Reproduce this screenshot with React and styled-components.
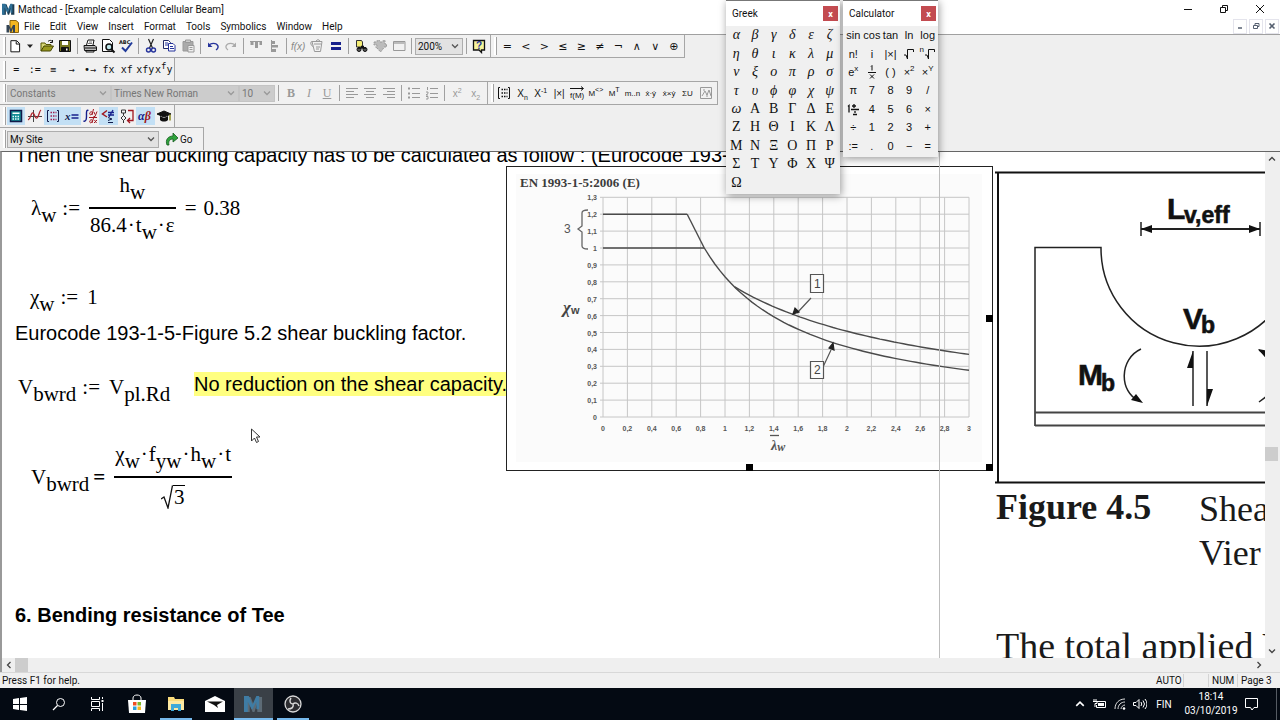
import styled, { createGlobalStyle } from 'styled-components'

const GlobalStyle = createGlobalStyle`
    * { box-sizing: border-box; }
    body {
        margin: 0;
        background: #efefef;
        font-family: Roboto, "Open Sans", sans-serif;
        font-size: 10px;
        color: #111111;
    }
    button, select {
        font-family: inherit;
        font-size: inherit;
        color: inherit;
        border: 0;
        margin: 0;
        padding: 0;
        background: transparent;
    }
    h1, h2, p { margin: 0; font-weight: 400; }
`

const Screen = styled.div`
    position: relative;
    display: flex;
    flex-direction: column;
    height: 100vh;
    overflow: hidden;
    white-space: nowrap;
`
const TitleBar = styled.header`
    display: flex;
    align-items: center;
    height: 18px;
    padding: 0 2px;
    gap: 3px;
    background: #ffffff;
    & > h1 {
        flex: 1;
        font-size: 10px;
    }
`
const MenuBar = styled.nav`
    display: flex;
    align-items: center;
    height: 17px;
    padding-left: 6px;
    background: #ffffff;
    border-bottom: 1px solid #a0a0a0;
`
const MenuList = styled.div`
    display: flex;
    flex: 1;
    gap: 10px;
    padding-left: 5px;
`
const WindowButtons = styled.div`
    display: flex;
    & > button {
        width: 36px;
        height: 16px;
        display: flex;
        align-items: center;
        justify-content: center;
    }
`
const ChildButtons = styled.div`
    display: flex;
    gap: 2px;
    padding-right: 1px;
    & > button {
        width: 14px;
        height: 15px;
        border: 1px solid #e4e4ec;
        display: flex;
        align-items: center;
        justify-content: center;
    }
`

const BarRow = styled.div`
    display: flex;
    height: ${p => p.$h}px;
`
const Bar = styled.div`
    display: flex;
    align-items: center;
    background: #f1f1f1;
    border-right: 1px solid #a6a6a6;
    border-top: ${p => p.$top ? '1px solid #a6a6a6' : '0'};
    border-bottom: ${p => p.$bottom ? '1px solid #a6a6a6' : '0'};
    padding-right: ${p => p.$end || 1}px;
    color: ${p => p.$muted ? '#999999' : '#111111'};
`
const Grip = styled.div`
    width: 7px;
    height: 18px;
    padding-left: 3px;
    &::after {
        content: "";
        display: block;
        width: 2px;
        height: 100%;
        background: #ffffff;
        border-right: 1px solid #a0a0a0;
    }
`
const Sep = styled.div`
    width: 7px;
    height: 16px;
    padding-left: 3px;
    &::after {
        content: "";
        display: block;
        width: 1px;
        height: 100%;
        background: #a0a0a0;
    }
`
const Group = styled.div`
    display: flex;
    width: ${p => p.$w}px;
`
const Tool = styled.button`
    flex: 1;
    min-width: 0;
    height: 18px;
    display: flex;
    align-items: center;
    justify-content: center;
    background: ${p => p.$on ? '#c3e0f5' : 'transparent'};
    font: ${p => p.$mono ? '10px "DejaVu Sans Mono", monospace' : '11px "DejaVu Sans", sans-serif'};
    & sup { font-size: 9px; line-height: 0; }
`
const LetterTool = styled(Tool)`
    font: 12px "Liberation Serif", serif;
    font-weight: ${p => p.$bold ? 700 : 400};
    font-style: ${p => p.$italic ? 'italic' : 'normal'};
    text-decoration: ${p => p.$underline ? 'underline' : 'none'};
`
const SelectBox = styled.div`
    display: flex;
    align-items: center;
    position: relative;
    width: ${p => p.$w}px;
    height: 17px;
    background: ${p => p.disabled ? '#cccccc' : '#e2e2e2'};
    border: 1px solid ${p => p.disabled ? '#c4c4c4' : '#adadad'};
    & > select {
        appearance: none;
        width: 100%;
        height: 15px;
        padding-left: 2px;
        color: ${p => p.disabled ? '#777777' : '#111111'};
        opacity: 1;
    }
    & > svg {
        position: absolute;
        right: 3px;
        pointer-events: none;
    }
`
const GoButton = styled.button`
    display: flex;
    align-items: center;
    gap: 1px;
    height: 18px;
    margin: 0 1px 0 6px;
`

const Document = styled.main`
    display: flex;
    flex: 1;
    min-height: 0;
    margin-top: 1px;
    border-top: 1px solid #666666;
    border-left: 2px solid #999999;
`
const DocumentBody = styled.div`
    display: flex;
    flex-direction: column;
    flex: 1;
    min-width: 0;
`
const Sheet = styled.section`
    position: relative;
    flex: 1;
    overflow: hidden;
    background: #ffffff;
    font-family: "Liberation Sans", Arial, sans-serif;
    font-size: 20px;
    line-height: 24px;
    color: #000000;
`
/* a worksheet region sits where the user dropped it */
const Region = styled.div`
    position: absolute;
    left: ${p => p.$x}px;
    top: ${p => p.$y}px;
`
const PageEdge = styled.div`
    position: absolute;
    left: 937px;
    top: 0;
    bottom: 0;
    border-left: 1px solid #bdbdbd;
`
const Note = styled.p`
    background: ${p => p.$mark ? '#ffff80' : 'transparent'};
`
const Heading = styled.h2`
    font-size: 20px;
    font-weight: 700;
`
const Book = styled.p`
    font-family: "Liberation Serif", serif;
    font-size: ${p => p.$size || 36}px;
    font-weight: ${p => p.$bold ? 700 : 400};
    line-height: 44px;
    color: #1a1a1a;
`
const MathRow = styled.div`
    display: flex;
    align-items: center;
    font-family: "Liberation Serif", serif;
    font-size: 21px;
    line-height: 24px;
    & sub {
        font-size: 21px;
        line-height: 0;
        vertical-align: -7px;
    }
`
const Op = styled.span`
    padding: 0 ${p => p.$r || 9}px 0 ${p => p.$l || 6}px;
    font-weight: ${p => p.$bold ? 700 : 400};
`
const Dot = styled.i`
    padding: 0 1px;
    font-style: normal;
    &::before { content: "·"; }
`
const Frac = styled.div`
    display: flex;
    flex-direction: column;
    text-align: center;
    & > span:first-child {
        height: 34px;
        padding: 0 1px;
    }
    & > span:last-child {
        height: 36px;
        padding: 4px 1px 0;
        border-top: 2px solid #000000;
    }
`
const Root = styled.span`
    display: flex;
    justify-content: center;
    & > b {
        font-weight: 400;
        border-top: 1px solid #000000;
        margin-top: 3px;
        line-height: 23px;
        padding: 0 1px;
    }
    & > svg { margin-top: 3px; }
`

const ScrollColumn = styled.div`
    display: flex;
    flex-direction: column;
    width: 15px;
    padding-right: 2px;
    background: #efefef;
`
const ScrollRow = styled.div`
    display: flex;
    height: 14px;
    background: #efefef;
`
const ScrollButton = styled.button`
    width: 13px;
    height: 14px;
    display: flex;
    align-items: center;
    justify-content: center;
`
const Track = styled.div`
    flex: ${p => p.$grow} 1 0;
`
const Thumb = styled.div`
    width: 13px;
    height: 14px;
    background: #cdcdcd;
`
const StatusBar = styled.footer`
    display: flex;
    align-items: center;
    height: 16px;
    padding-left: 2px;
    background: #f0f0f0;
    border-top: 1px solid #d8d8d8;
    & > p { flex: 1; }
`
const StatusCell = styled.span`
    width: ${p => p.$w}px;
    height: 13px;
    line-height: 13px;
    padding-left: 3px;
    border-left: 1px solid ${p => p.$open ? 'transparent' : '#d4d4d4'};
`

const Taskbar = styled.footer`
    display: flex;
    height: 32px;
    background: #040a13;
    color: #ffffff;
`
const TaskButton = styled.button`
    width: 39px;
    height: 32px;
    display: flex;
    align-items: center;
    justify-content: center;
    background-color: ${p => p.$active ? '#3a4047' : 'transparent'};
    background-image: ${p => p.$running ? 'linear-gradient(#76b9ed, #76b9ed)' : 'none'};
    background-size: ${p => p.$active ? 39 : 32}px 2px;
    background-position: bottom center;
    background-repeat: no-repeat;
`
const Tray = styled.div`
    display: flex;
    align-items: center;
    margin-left: auto;
    & > button {
        display: flex;
        justify-content: center;
        width: 20px;
    }
`
const Language = styled.span`
    width: 28px;
    text-align: center;
`
const Clock = styled.time`
    width: 62px;
    margin-left: 2px;
    text-align: center;
    font-size: 10px;
    line-height: 14px;
`
const ShowDesktop = styled.div`
    width: 4px;
    height: 32px;
    margin-left: 14px;
    border-left: 1px solid #555b63;
`

const Palette = styled.section`
    position: absolute;
    top: 0;
    left: ${p => p.$x}px;
    padding: 0 1px 2px;
    background: #f0f0f0;
    border-top: 1px solid #777777;
    box-shadow: 1px 2px 8px rgba(0, 0, 0, 0.4);
`
const PaletteTitle = styled.div`
    display: flex;
    align-items: center;
    justify-content: space-between;
    height: 25px;
    margin: 0 -1px;
    padding: 0 2px 0 6px;
    background: #ffffff;
    & > button {
        width: 15px;
        height: 15px;
        background: #c34b50;
        color: #ffffff;
        font-weight: 700;
        font-size: 9px;
        line-height: 12px;
    }
`
const PaletteGrid = styled.div`
    display: grid;
    width: ${p => p.$w}px;
    height: ${p => p.$h}px;
    grid-template-columns: repeat(${p => p.$cols}, 1fr);
    grid-auto-rows: 1fr;
    & > button {
        display: flex;
        align-items: center;
        justify-content: center;
        min-width: 0;
        font-family: ${p => p.$serif ? '"Liberation Serif", serif' : '"Liberation Sans", sans-serif'};
        font-size: ${p => p.$serif ? 14 : 11}px;
        line-height: 16px;
    }
    & sup {
        align-self: flex-start;
        font-size: 8px;
        line-height: 12px;
    }
`
const GreekKey = styled.button`
    font-style: ${p => p.$italic ? 'italic' : 'normal'};
`

/* ---------- small drawings ---------- */

function Icon({ w = 16, h = 16, children, ...rest }) {
    return (
        <svg width={w} height={h} viewBox={`0 0 ${w} ${h}`} fill="none" stroke="#111" strokeWidth="1" aria-hidden="true" {...rest}>
            {children}
        </svg>
    )
}

function Chevron({ dir = 'down', color = '#444', size = 8 }) {
    const turn = { down: 0, left: 90, up: 180, right: 270 }[dir]
    return (
        <svg width={size} height={size} viewBox="0 0 8 8" fill="none" stroke={color} strokeWidth="1.3" aria-hidden="true">
            <path d="M1 2.5L4 5.5L7 2.5" transform={`rotate(${turn} 4 4)`} />
        </svg>
    )
}

function MLogo({ size = 13, front = '#2f6f96', back = '#1d3d52' }) {
    return (
        <svg width={size} height={size} viewBox="0 0 20 20" aria-hidden="true">
            <path d="M1 2h6l3 8 3-8h6v16h-5V9l-3 9H9L6 9v9H1z" fill={back} />
            <path d="M0 1h5l4 9 4-9h3v14h-3V7l-4 8H8L4 7v11H0z" fill={front} />
        </svg>
    )
}

const icons = {
    fresh: <Icon><path d="M4 2.5h6l3 3V14H4zM9.5 3v3H13" fill="#fff" /></Icon>,
    drop: <Icon w={8} h={8}><path d="M1 2.5h6L4 6z" fill="#222" stroke="none" /></Icon>,
    open: <Icon><path d="M2 13V5h4l1 1.5h5V8" fill="#d8d878" stroke="#555500" /><path d="M2 13l3-5h9.5l-3 5z" fill="#9a9a20" stroke="#444400" /><path d="M9 3.5c2-2 4-1 4.5.5M13.5 2v2.5H11" /></Icon>,
    save: <Icon><path d="M2.5 2.5h11v11h-11z" fill="#777722" /><path d="M5 3h6v4H5z" fill="#fff" stroke="none" /><path d="M4.5 9.5h7V13h-7z" fill="#111" /><path d="M9 10.5h1.5v2H9z" fill="#fff" stroke="none" /></Icon>,
    print: <Icon><path d="M4.5 7l1.5-5h6l-1 5" fill="#fff" /><path d="M2 7.5h11l1.5 1.5v3.5h-12z" fill="#bbb" /><path d="M3 10h11M4 12.5h8v1.5H4z" fill="#ddd" /><path d="M7 4h3M6 5.5h4" stroke="#777" /></Icon>,
    preview: <Icon><path d="M2.5 1.5h7l3 3v9h-10z" fill="#fff" /><circle cx="9" cy="9" r="3" fill="#bfe6ea" strokeWidth="1.5" /><path d="M11 11l3.5 3.5" strokeWidth="2" /></Icon>,
    spell: <Icon><text x="1" y="6" fontSize="5" fontFamily="DejaVu Sans" fontWeight="700" stroke="none" fill="#111">ABC</text><path d="M4 9.5L7.5 13L14 4.5" stroke="#203a9a" strokeWidth="2" /></Icon>,
    cut: <Icon><path d="M5.5 1l4 9M10.5 1l-4 9" stroke="#222" strokeWidth="1.2" /><circle cx="5.5" cy="12" r="2" stroke="#26349c" strokeWidth="1.4" /><circle cx="10.5" cy="12" r="2" stroke="#26349c" strokeWidth="1.4" /></Icon>,
    copy: <Icon><path d="M2.5 2.5h5l2 2v6h-7z" fill="#fff" stroke="#222a66" /><path d="M7.5 5.5h4.5l2 2V13H7.5z" fill="#fff" stroke="#26349c" /><path d="M4 5h3M4 7h3M9 8.5h3M9 10.5h4" stroke="#26349c" /></Icon>,
    paste: <Icon><path d="M3 3.5h10V13H3z" fill="#aaa" stroke="#999" /><path d="M5.5 2h5v2.5h-5z" fill="#ccc" stroke="#999" /><path d="M8 7.5h6V14H8z" fill="#eee" stroke="#999" /><path d="M9.5 9.5h3M9.5 11.5h3" stroke="#999" /></Icon>,
    undo: <Icon><path d="M3.5 8c2-3.5 8-3.5 9.5 0 .5 2-.5 3-2 4" stroke="#26349c" strokeWidth="1.4" /><path d="M3 4.5V9h4.5z" fill="#26349c" stroke="none" /></Icon>,
    redo: <Icon><path d="M12.5 8c-2-3.5-8-3.5-9.5 0-.5 2 .5 3 2 4" stroke="#aaa" strokeWidth="1.2" /><path d="M13 4.5V9H8.5z" fill="#aaa" stroke="none" /></Icon>,
    alignTop: <Icon><path d="M2 3.5h12" stroke="#999" /><path d="M2.5 4h3v3h-3zM7 4h3v6H7zM11.5 4H14v3h-2.5z" fill="#999" stroke="none" /></Icon>,
    alignSide: <Icon><path d="M5.5 2v12" stroke="#999" /><path d="M6 3h3v3H6zM6 7h6v2.5H6zM6 11h4v3H6z" fill="#999" stroke="none" /></Icon>,
    fx: <Icon w={18}><text x="1" y="12" fontSize="10" fontFamily="Liberation Sans" fontStyle="italic" stroke="none" fill="#888">f(x)</text></Icon>,
    unit: <Icon><path d="M3 3.5h10l-1.5 10h-6zM3 3.5c-2 0-1.5 4 1 5M5 6h7M7 3l2-1.5 2 1.5M7 9h4M7 11h3" stroke="#999" /></Icon>,
    calc: <Icon><path d="M3 4h10v3H3zM3 9h10v3H3z" fill="#17208c" stroke="none" /></Icon>,
    insert: <Icon><path d="M3.5 2.5h5l1 1.5v5h-6z" fill="#f5ee76" stroke="#333" /><circle cx="6" cy="11.5" r="2" fill="#555" /><circle cx="12" cy="11.5" r="2" fill="#555" /><path d="M5 10h8M8 8.5h3" strokeWidth="1.5" /></Icon>,
    puzzle: <Icon><path d="M2 4h3V2.5h2.5V4H11V2.5h2V6h1.5v3H12l-1 2-2.5 3L6 11 3.5 9H5V7H2z" fill="#bbb" stroke="#999" strokeDasharray="2 1" /></Icon>,
    frame: <Icon><path d="M2.5 3.5h11.5v9H2.5z" stroke="#999" /><path d="M3 5h11" stroke="#bbb" strokeWidth="2" /></Icon>,
    help: <Icon><path d="M2.5 2.5H13.5V12H10.5v2.5L8 12H2.5z" fill="#f8f49a" strokeWidth="1.3" /><text x="5" y="11" fontSize="10" fontFamily="Liberation Sans" fontWeight="700" stroke="none" fill="#26349c">?</text></Icon>,
    left: <Icon><path d="M2 3.5h12M2 6.5h8M2 9.5h12M2 12.5h8" stroke="#999" /></Icon>,
    center: <Icon><path d="M2 3.5h12M4 6.5h8M2 9.5h12M4 12.5h8" stroke="#999" /></Icon>,
    right: <Icon><path d="M2 3.5h12M6 6.5h8M2 9.5h12M6 12.5h8" stroke="#999" /></Icon>,
    bullets: <Icon><path d="M6 3.5h8M6 8.5h8M6 12.5h8" stroke="#999" /><path d="M2 2.5h2v2H2zM2 7.5h2v2H2zM2 11.5h2v2H2z" fill="#999" stroke="none" /></Icon>,
    numbers: <Icon><path d="M6 3.5h8M6 8.5h8M6 12.5h8M3.5 2v3M2 7h2v1.5L2 10h2M2 11.5h2v2.5H2" stroke="#999" /></Icon>,
    matrix: <Icon><path d="M4 2.5H2.5v11H4M12 2.5h1.5v11H12" /><path d="M5.5 4.5h6M5.5 8h6M5.5 11.5h6" strokeWidth="1.5" strokeDasharray="1.5 1" /></Icon>,
    vector: <Icon><text x="1" y="13" fontSize="8" fontFamily="Liberation Sans" stroke="none" fill="#111">f(M)</text><path d="M1 3.5h13M12 1.5l2.5 2-2.5 2" /></Icon>,
    picture: <Icon><path d="M2.5 2.5h11v11h-11zM4 11l3-5 2 4 2-5 2 6M5 5h2M9 12V9" stroke="#999" /></Icon>,
    sheetCalc: <Icon><path d="M2.5 2.5h11v11h-11z" fill="#138c94" stroke="#111a4a" strokeWidth="1.5" /><path d="M4.5 4.5h7v1.5h-7z" fill="#fff" stroke="none" /><path d="M4.5 8.5h7M4.5 11h7" stroke="#e8ffff" strokeWidth="1.5" strokeDasharray="1.5 1" /></Icon>,
    graph: <Icon><path d="M1 8.5h14M6.5 2v12" stroke="#444" /><path d="M1 12C4 11 4 4 6 5s2 6 4 5 2-7 4-8" stroke="#b3262e" strokeWidth="1.3" /></Icon>,
    matrixBlue: <Icon><path d="M4 2.5H2.5v11H4M12 2.5h1.5v11H12" stroke="#111a4a" /><path d="M5.5 4.5h6M5.5 8h6M5.5 11.5h6" stroke="#a02050" strokeWidth="1.5" strokeDasharray="1.5 1" /></Icon>,
    evaluate: <Icon><text x="1" y="12" fontSize="11" fontFamily="Liberation Serif" fontStyle="italic" fontWeight="700" stroke="none" fill="#111a4a">x</text><path d="M7.5 7h7M7.5 10h7" stroke="#17208c" strokeWidth="1.5" /></Icon>,
    calculus: <Icon><path d="M6.500 2.5C4 1 4.5 6 4.500 8s0 6-3 5" stroke="#17208c" strokeWidth="1.4" /><path d="M8 4.500c2-2 3 0 1.500 2-2 1-2-1-1.500-2M11.500 1l-1.500 6M12 4l1 2.500M15 3.500l-2 5h-1.500M8 12.500c2-2 3 0 1.500 2-2 1-2-1-1.500-2M11.500 10L10 15M12.500 12l2 3M15 12l-3 3" stroke="#a11720" /><path d="M7 9.500h8" stroke="#a11720" /></Icon>,
    compare: <Icon><path d="M7 2.5L2.5 6L7 9" stroke="#a11720" strokeWidth="1.5" /><path d="M8 4.500h6M8 7h6M13 2l-4 7" stroke="#17208c" strokeWidth="1.300" /><path d="M8 9.500l4 1.500-4 1.500M8 14.500h5" stroke="#111a4a" /></Icon>,
    program: <Icon><path d="M2.5 2h4v3h-4zM4.5 5v2.5M2 10l2.5-2.5L7 10l-2.5 2.5zM4.5 12.5V15" stroke="#333" /><path d="M9 2.5h5v10H9M11 10l-2.5 2.5L11 15" stroke="#a11720" strokeWidth="1.3" /></Icon>,
    greek: <Icon w={18}><text x="2" y="12" fontSize="12" fontFamily="Liberation Serif" fontStyle="italic" fontWeight="700" stroke="none" fill="#17208c">α<tspan fill="#a11720">β</tspan></text></Icon>,
    hat: <Icon><path d="M8 3l7 3-7 3-7-3z" fill="#111" /><path d="M4 8v4c2 2 6 2 8 0V8L8 10z" fill="#111" stroke="none" /><path d="M14 6.5v6" stroke="#8a8a20" strokeWidth="1.5" /></Icon>,
    go: <Icon w={14} h={14}><path d="M2 13C0 8 3 4 8 4V1l5 5-5 4V7C5 7 3 9 4 13z" fill="#2fa33c" stroke="#155a1e" strokeWidth=".8" /></Icon>,
    root: <Icon w={12} h={12}><path d="M1 7h2l1.5 4V1.500H10.500V4" /></Icon>,
    overX: <Icon w={12} h={16}><path d="M5 2.500l1-1v5M2 8.500h8M4 10.500l4 4M8 10.500l-4 4" /></Icon>,
    mixed: <Icon w={14} h={14}><path d="M2 4.500l1-1v7M8 2v4M6 4h4M5 7.500h8M9 9v2M7 12.500h4" strokeWidth="1.300" /></Icon>,
}

/* ---------- toolbars ---------- */

const relations = ['=', '<', '>', '≤', '≥', '≠', '¬', '∧', '∨', '⊕']
const evaluations = ['=', ':=', '≡', '→', '•→', 'fx', 'xf', 'xfy']
const menus = ['File', 'Edit', 'View', 'Insert', 'Format', 'Tools', 'Symbolics', 'Window', 'Help']

function Tools({ w, names, on = [] }) {
    return (
        <Group $w={w}>
            {names.map(name => <Tool key={name} $on={on.includes(name)} aria-label={name}>{icons[name]}</Tool>)}
        </Group>
    )
}

function Picker({ w, value, label, disabled }) {
    return (
        <SelectBox $w={w} disabled={disabled}>
            <select aria-label={label} defaultValue={value} disabled={disabled}>
                <option>{value}</option>
            </select>
            <Chevron color={disabled ? '#999' : '#555'} />
        </SelectBox>
    )
}

const MatrixText = styled.span`
    font: ${p => p.$size || 10}px "Liberation Sans", sans-serif;
    & sub, & sup { font-size: 7px; line-height: 0; }
`

function Toolbars() {
    return (
        <div>
            <BarRow $h={23}>
                <Bar $bottom $end={2}>
                    <Grip />
                    <Group $w={31}><Tool aria-label="New">{icons.fresh}</Tool><Tool aria-label="Templates">{icons.drop}</Tool></Group>
                    <Tools w={36} names={['open', 'save']} />
                    <Sep />
                    <Tools w={54} names={['print', 'preview', 'spell']} />
                    <Sep />
                    <Tools w={55} names={['cut', 'copy', 'paste']} />
                    <Sep />
                    <Tools w={36} names={['undo', 'redo']} />
                    <Sep />
                    <Tools w={36} names={['alignTop', 'alignSide']} />
                    <Sep />
                    <Tools w={55} names={['fx', 'unit', 'calc']} />
                    <Sep />
                    <Tools w={56} names={['insert', 'puzzle', 'frame']} />
                    <Sep />
                    <Picker w={48} value="200%" label="Zoom" />
                    <Sep />
                    <Tools w={18} names={['help']} />
                </Bar>
                <Bar $bottom>
                    <Grip />
                    <Group $w={185}>
                        {relations.map(r => <Tool key={r}>{r}</Tool>)}
                    </Group>
                </Bar>
            </BarRow>
            <BarRow $h={23}>
                <Bar>
                    <Grip />
                    <Group $w={166}>
                        {evaluations.map(e => <Tool key={e} $mono>{e}</Tool>)}
                        <Tool $mono><span>x<sup>f</sup>y</span></Tool>
                    </Group>
                </Bar>
            </BarRow>
            <BarRow $h={24}>
                <Bar $top $bottom $muted $end={2}>
                    <Grip />
                    <Picker w={104} value="Constants" label="Style" disabled />
                    <Picker w={128} value="Times New Roman" label="Font" disabled />
                    <Picker w={36} value="10" label="Font size" disabled />
                    <Sep />
                    <Group $w={54}>
                        <LetterTool $bold>B</LetterTool>
                        <LetterTool $italic>I</LetterTool>
                        <LetterTool $underline>U</LetterTool>
                    </Group>
                    <Sep />
                    <Tools w={55} names={['left', 'center', 'right']} />
                    <Sep />
                    <Tools w={36} names={['bullets', 'numbers']} />
                    <Sep />
                    <Group $w={37}>
                        <Tool><MatrixText>x<sup>2</sup></MatrixText></Tool>
                        <Tool><MatrixText>x<sub>2</sub></MatrixText></Tool>
                    </Group>
                </Bar>
                <Bar $top $bottom $end={2}>
                    <Grip />
                    <Group $w={220}>
                        <Tool aria-label="Matrix">{icons.matrix}</Tool>
                        <Tool><MatrixText>X<sub>n</sub></MatrixText></Tool>
                        <Tool><MatrixText>X<sup>-1</sup></MatrixText></Tool>
                        <Tool><MatrixText>|×|</MatrixText></Tool>
                        <Tool aria-label="Vectorize">{icons.vector}</Tool>
                        <Tool><MatrixText $size={8}>M<sup>&lt;&gt;</sup></MatrixText></Tool>
                        <Tool><MatrixText $size={8}>M<sup>T</sup></MatrixText></Tool>
                        <Tool><MatrixText $size={8}>m..n</MatrixText></Tool>
                        <Tool><MatrixText $size={8}>ẋ·ẏ</MatrixText></Tool>
                        <Tool><MatrixText $size={8}>ẋ×ẏ</MatrixText></Tool>
                        <Tool><MatrixText $size={8}>ΣU</MatrixText></Tool>
                        <Tool aria-label="Picture">{icons.picture}</Tool>
                    </Group>
                </Bar>
            </BarRow>
            <BarRow $h={22}>
                <Bar>
                    <Grip />
                    <Tools
                        w={166}
                        names={['sheetCalc', 'graph', 'matrixBlue', 'evaluate', 'calculus', 'compare', 'program', 'greek', 'hat']}
                        on={['sheetCalc', 'matrixBlue', 'evaluate', 'compare', 'greek']}
                    />
                </Bar>
            </BarRow>
            <BarRow $h={23}>
                <Bar $top $end={9}>
                    <Grip />
                    <Picker w={152} value="My Site" label="Address" />
                    <GoButton>{icons.go}Go</GoButton>
                </Bar>
            </BarRow>
        </div>
    )
}

/* ---------- floating palettes ---------- */

const greekLower = [...'αβγδεζηθικλμνξοπρστυϕφχψω']
const greekUpper = [...'ΑΒΓΔΕΖΗΘΙΚΛΜΝΞΟΠΡΣΤΥΦΧΨΩ']
const calculatorKeys = [
    'sin', 'cos', 'tan', 'ln', 'log',
    'n!', 'i', '|×|', icons.root, <><sup>n</sup>{icons.root}</>,
    <>e<sup>x</sup></>, icons.overX, '( )', <>×<sup>2</sup></>, <>×<sup>Y</sup></>,
    'π', '7', '8', '9', '/',
    icons.mixed, '4', '5', '6', '×',
    '÷', '1', '2', '3', '+',
    ':=', '.', '0', '−', '=',
]

function Palettes() {
    return (
        <>
            <Palette $x={726}>
                <PaletteTitle>Greek<button aria-label="Close Greek">x</button></PaletteTitle>
                <PaletteGrid $w={112} $h={166} $cols={6} $serif>
                    {greekLower.map(g => <GreekKey key={g} $italic>{g}</GreekKey>)}
                    {greekUpper.map(g => <GreekKey key={g}>{g}</GreekKey>)}
                </PaletteGrid>
            </Palette>
            <Palette $x={843}>
                <PaletteTitle>Calculator<button aria-label="Close Calculator">x</button></PaletteTitle>
                <PaletteGrid $w={93} $h={129} $cols={5}>
                    {calculatorKeys.map((k, i) => <button key={i}>{k}</button>)}
                </PaletteGrid>
            </Palette>
        </>
    )
}

/* ---------- buckling chart ---------- */

const X0 = 97, Y0 = 251, SX = 122, SY = 169
const px = v => X0 + v * SX
const py = v => Y0 - v * SY

function curve(fn, from, to) {
    const steps = 50
    const pts = []
    for (let i = 0; i <= steps; i++) {
        const v = from + (to - from) * i / steps
        pts.push(`${px(v).toFixed(1)} ${py(fn(v)).toFixed(1)}`)
    }
    return 'M' + pts.join('L')
}

function BucklingChart() {
    const xs = Array.from({ length: 16 }, (_, i) => i / 5)
    const ys = Array.from({ length: 14 }, (_, i) => i / 10)
    const comma = v => String(v).replace('.', ',')
    return (
        <svg width="488" height="305" viewBox="0 0 488 305" fontFamily="Liberation Sans" role="img" aria-label="Shear buckling factor">
            <rect x=".5" y=".5" width="486" height="304" fill="#fff" stroke="#222" />
            <rect x="10" y="8" width="466" height="288" fill="#fbfbfb" />
            <g stroke="#c6c6c6">
                {xs.map(v => <path key={v} d={`M${px(v)} ${py(1.3)}V${Y0}`} />)}
                {ys.map(v => <path key={v} d={`M${X0 - 3} ${py(v)}H${px(3)}`} />)}
            </g>
            <g fontSize="7" fill="#555" fontWeight="700">
                {xs.map(v => <text key={v} x={px(v)} y="265" textAnchor="middle">{comma(v)}</text>)}
                {ys.map(v => <text key={v} x="91" y={py(v) + 3} textAnchor="end">{comma(v)}</text>)}
            </g>
            <g fill="none" stroke="#4a4a4a" strokeWidth="1.4">
                <path d={`M${X0} ${py(1.2)}H${px(0.69)}`} />
                <path d={`M${X0} ${py(1)}H${px(0.83)}`} />
                <path d={`M${px(0.69)} ${py(1.2)}L${px(0.83)} ${py(1)}`} />
                <path d={curve(v => 0.83 / v, 0.83, 3)} />
                <path d={curve(v => 1.37 / (0.7 + v), 1.08, 3)} />
            </g>
            <path d="M82 44q-6 0-6 3v13l-4 3 4 3v14q0 3 6 3" fill="none" stroke="#666" strokeWidth="1.3" />
            <text x="58" y="67" fontSize="12" fill="#555">3</text>
            <text x="57" y="147" fontSize="17" fontFamily="Liberation Serif" fontStyle="italic" fontWeight="700" fill="#444">χ<tspan fontSize="11" fontFamily="Liberation Sans" fontStyle="normal" dy="1">w</tspan></text>
            <text x="265" y="284" fontSize="14" fontFamily="Liberation Serif" fontStyle="italic" fontWeight="700" fill="#555">λ<tspan fontSize="12" dy="1">w</tspan></text>
            <path d="M264 269.5h9" stroke="#555" strokeWidth="1.3" />
            <text x="14" y="21" fontSize="13" fontFamily="Liberation Serif" fontWeight="700" fill="#3c3c3c">EN 1993-1-5:2006 (E)</text>
            <g fill="#fbfbfb" stroke="#555" strokeWidth="1.2">
                <path d="M305 132l-14 15M317 201l8-17" />
                <path d="M304.5 108.5h13v18h-13zM304.5 195.5h13v17h-13z" />
                <path d="M287 148l2-6 4 4zM327 177l-4 5 5 2z" fill="#222" stroke="#222" />
            </g>
            <g fontSize="12" fill="#444">
                <text x="308" y="122">1</text>
                <text x="308" y="208">2</text>
            </g>
            <path d="M240 298h7v7h-7zM480 298h7v7h-7zM480 149h7v7h-7z" fill="#000" />
        </svg>
    )
}

function BeamFigure() {
    return (
        <svg width="290" height="316" viewBox="0 0 290 316" fontFamily="Liberation Sans" fontWeight="700" role="img" aria-label="Forces on the tee">
            <path d="M1 2.5H290M4 2v311M1 312.5H290" fill="none" stroke="#111" strokeWidth="2" />
            <g fill="none" stroke="#222" strokeWidth="1.5">
                <path d="M41 256V77.5H107A98 98 0 0 0 290 127" />
                <path d="M41 242.5H290M41 255.5H290" stroke="#444" strokeWidth="2" />
                <path d="M147 52v14M266 52v14M199 181v55M213 181v55" />
                <path d="M147 59H266" strokeWidth="2" />
                <path d="M147 179c-22 10-22 43-2 52M265 232l8-6M265 180l10 8" />
            </g>
            <path d="M147 59l11-4v8zM266 59l-11-4v8zM199 181v17h-6zM213 236v-17h6zM149 233l-12-3 5-6zM264 179l12 2v12z" fill="#111" />
            <g fill="#111" stroke="#111" strokeWidth=".6">
                <text x="173" y="49" fontSize="30">L</text>
                <text x="190" y="53" fontSize="23">v,eff</text>
                <text x="189" y="159" fontSize="30">V</text>
                <text x="207" y="163" fontSize="23">b</text>
                <text x="84" y="215" fontSize="30">M</text>
                <text x="107" y="221" fontSize="23">b</text>
            </g>
        </svg>
    )
}

function Worksheet() {
    return (
        <Sheet>
            <Region $x={13} $y={-9}><Note>Then the shear buckling capacity has to be calculated as follow : (Eurocode 193-1-</Note></Region>
            <Region $x={29} $y={21}>
                <MathRow>
                    <span>λ<sub>w</sub></span>
                    <Op>:=</Op>
                    <Frac>
                        <span>h<sub>w</sub></span>
                        <span>86.4<Dot />t<sub>w</sub><Dot />ε</span>
                    </Frac>
                    <Op $l={9} $r={7}>=</Op>
                    <span>0.38</span>
                </MathRow>
            </Region>
            <Region $x={28} $y={133}>
                <MathRow><span>χ<sub>w</sub></span><Op>:=</Op><span>1</span></MathRow>
            </Region>
            <Region $x={13} $y={169}><Note>Eurocode 193-1-5-Figure 5.2 shear buckling factor.</Note></Region>
            <Region $x={16} $y={223}>
                <MathRow><span>V<sub>bwrd</sub></span><Op>:=</Op><span>V<sub>pl.Rd</sub></span></MathRow>
            </Region>
            <Region $x={192} $y={220}><Note $mark>No reduction on the shear capacity.</Note></Region>
            <Region $x={29} $y={290}>
                <MathRow>
                    <span>V<sub>bwrd</sub></span>
                    <Op $bold $l={4}>=</Op>
                    <Frac>
                        <span>χ<sub>w</sub><Dot />f<sub>yw</sub><Dot />h<sub>w</sub><Dot />t</span>
                        <Root>
                            <Icon w={12} h={24} strokeWidth="1.3"><path d="M0 14l3-2 4 11L11.5.5" /></Icon>
                            <b>3</b>
                        </Root>
                    </Frac>
                </MathRow>
            </Region>
            <Region $x={13} $y={451}><Heading>6. Bending resistance of Tee</Heading></Region>
            <Region $x={504} $y={14}><BucklingChart /></Region>
            <Region $x={992} $y={18}><BeamFigure /></Region>
            <Region $x={994} $y={333}><Book $bold>Figure 4.5</Book></Region>
            <Region $x={1197} $y={335}><Book>Shea</Book></Region>
            <Region $x={1197} $y={379}><Book>Vier</Book></Region>
            <Region $x={994} $y={472}><Book $size={38}>The total applied V</Book></Region>
            <PageEdge />
            <Region $x={249} $y={273}>
                <Icon w={10} h={16}><path d="M.5 1v12l3-3 2 4.5 2-1L5.5 9H9z" fill="#fff" stroke="#333" /></Icon>
            </Region>
        </Sheet>
    )
}

function DesktopTaskbar() {
    return (
        <Taskbar>
            <TaskButton aria-label="Start">
                <Icon w={14} h={14}><path d="M0 2l6-1v6H0zM7 1l7-1v7H7zM0 8h6v5l-6-1zM7 8h7v6l-7-1z" fill="#fff" stroke="none" /></Icon>
            </TaskButton>
            <TaskButton aria-label="Search">
                <Icon w={14} h={14}><circle cx="8.5" cy="5.5" r="4" stroke="#fff" /><path d="M5.5 8.5L1 13" stroke="#fff" strokeWidth="1.3" /></Icon>
            </TaskButton>
            <TaskButton aria-label="Task view">
                <Icon w={14} h={14}><path d="M.5 4.5h8v5h-8zM.5 0v2.5h8V0M.5 14v-2.5h8V14M11.5 0v2M11.5 6v8" stroke="#fff" /><path d="M10.5 3h2v2h-2z" fill="#fff" stroke="none" /></Icon>
            </TaskButton>
            <TaskButton aria-label="Store">
                <Icon w={20} h={20}><path d="M6 6V4c0-4 8-4 8 0v2" stroke="#fff" /><path d="M1 6h18l-1 13H2z" fill="#fff" stroke="none" /><path d="M6 8h3.5v3.5H6z" fill="#f04e23" stroke="none" /><path d="M10.5 8H14v3.5h-3.5z" fill="#7db82b" stroke="none" /><path d="M6 12.5h3.5V16H6z" fill="#2a9fdc" stroke="none" /><path d="M10.5 12.5H14V16h-3.5z" fill="#f8b81c" stroke="none" /></Icon>
            </TaskButton>
            <TaskButton $running aria-label="File Explorer">
                <Icon w={18} h={16}><path d="M1 1h6l1 2h9v11H1z" fill="#fbdc7c" stroke="none" /><path d="M1 5h16v9H1z" fill="#fde9a3" stroke="none" /><path d="M4 15V8h10v7h-3v-3H7v3z" fill="#3fa9d8" stroke="none" /></Icon>
            </TaskButton>
            <TaskButton aria-label="Mail">
                <Icon w={20} h={16}><path d="M0 5l10-5 10 5v11H0z" fill="#fff" stroke="none" /><path d="M2 5.5h16l-6 3.5 1 3-4-3z" fill="#111" stroke="none" /></Icon>
            </TaskButton>
            <TaskButton $running $active aria-label="Mathcad"><MLogo size={19} front="#3f7ca4" back="#5d6b76" /></TaskButton>
            <TaskButton $running aria-label="OBS">
                <Icon w={18} h={18}><circle cx="9" cy="9" r="8" fill="#2c2c30" stroke="#d8d8d8" strokeWidth="1.3" /><path d="M9 9C6 9 5 6 7 3M9 9c2-2 5-1 6 2M9 9c1 3-1 5-5 5" stroke="#d8d8d8" strokeWidth="1.5" /></Icon>
            </TaskButton>
            <Tray>
                <button aria-label="Hidden icons"><Chevron dir="up" color="#fff" size={10} /></button>
                <button aria-label="Battery"><Icon w={14} h={12}><path d="M4 3.5h8.5v6H3.5V7M1 1v2M3 1v2M0 3.5h4v2H2V9" stroke="#fff" /><path d="M5 5h6v3H5z" fill="#fff" stroke="none" /></Icon></button>
                <button aria-label="Network"><Icon w={12} h={12}><path d="M1 11C1 5 5 1 11 1M4 11c0-4 3-7 7-7M7 11c0-2 2-4 4-4" stroke="#ddd" /><circle cx="10" cy="10.5" r="1.3" fill="#fff" stroke="none" /></Icon></button>
                <button aria-label="Volume"><Icon w={14} h={12}><path d="M.5 4.5H3L6 1.5v9L3 7.5H.5zM8 4q1.500 2 0 4M10 2.5q3 3.5 0 7M12 1q4 5 0 10" stroke="#fff" /></Icon></button>
                <Language>FIN</Language>
                <Clock>18:14<br />03/10/2019</Clock>
                <button aria-label="Notifications"><Icon w={14} h={14}><path d="M.5 1.5h12v9H9L7 13l-1.5-2.5h-5z" stroke="#fff" /></Icon></button>
                <ShowDesktop />
            </Tray>
        </Taskbar>
    )
}

function App() {
    return (
        <>
            <GlobalStyle />
            <Screen>
                <TitleBar>
                    <MLogo />
                    <h1>Mathcad - [Example calculation Cellular Beam]</h1>
                    <WindowButtons>
                        <button aria-label="Minimize"><Icon w={10} h={10}><path d="M1 5.5h8" /></Icon></button>
                        <button aria-label="Restore"><Icon w={10} h={10}><path d="M1.5 3.5h5v5h-5zM3.5 3V1.5h5v5H7" /></Icon></button>
                        <button aria-label="Close"><Icon w={10} h={10}><path d="M1 1l8 8M9 1l-8 8" /></Icon></button>
                    </WindowButtons>
                </TitleBar>
                <MenuBar>
                    <Icon w={13} h={13}><path d="M4 .5h6l2.500 2v10H4z" fill="#f3b61f" stroke="#8a6410" /><path d="M.5 5h2.500l2 4 2-4h2v7.500H7V8L5.500 12h-1L3 8v4.500H.5z" fill="#345" stroke="none" /></Icon>
                    <MenuList>{menus.map(m => <button key={m}>{m}</button>)}</MenuList>
                    <ChildButtons>
                        <button aria-label="Minimize sheet"><Icon w={8} h={8}><path d="M2 6h4" stroke="#566070" strokeWidth="1.5" /></Icon></button>
                        <button aria-label="Restore sheet"><Icon w={8} h={8}><path d="M1.5 3.5h4v3h-4zM3 3V1.5h4v3H6" stroke="#566070" /></Icon></button>
                        <button aria-label="Close sheet"><Icon w={8} h={8}><path d="M1.5 1.5l5 5M6.5 1.5l-5 5" stroke="#566070" strokeWidth="1.6" /></Icon></button>
                    </ChildButtons>
                </MenuBar>
                <Toolbars />
                <Document>
                    <DocumentBody>
                        <Worksheet />
                        <ScrollRow>
                            <ScrollButton aria-label="Scroll left"><Chevron dir="left" /></ScrollButton>
                            <Thumb />
                            <Track $grow={1} />
                            <ScrollButton aria-label="Scroll right"><Chevron dir="right" /></ScrollButton>
                        </ScrollRow>
                    </DocumentBody>
                    <ScrollColumn>
                        <ScrollButton aria-label="Scroll up"><Chevron dir="up" /></ScrollButton>
                        <Track $grow={281} />
                        <Thumb />
                        <Track $grow={183} />
                        <ScrollButton aria-label="Scroll down"><Chevron /></ScrollButton>
                        <ScrollRow />
                    </ScrollColumn>
                </Document>
                <StatusBar>
                    <p>Press F1 for help.</p>
                    <StatusCell $w={31} $open>AUTO</StatusCell>
                    <StatusCell $w={25} />
                    <StatusCell $w={29}>NUM</StatusCell>
                    <StatusCell $w={43}>Page 3</StatusCell>
                </StatusBar>
                <DesktopTaskbar />
                <Palettes />
            </Screen>
        </>
    )
}

export default App
